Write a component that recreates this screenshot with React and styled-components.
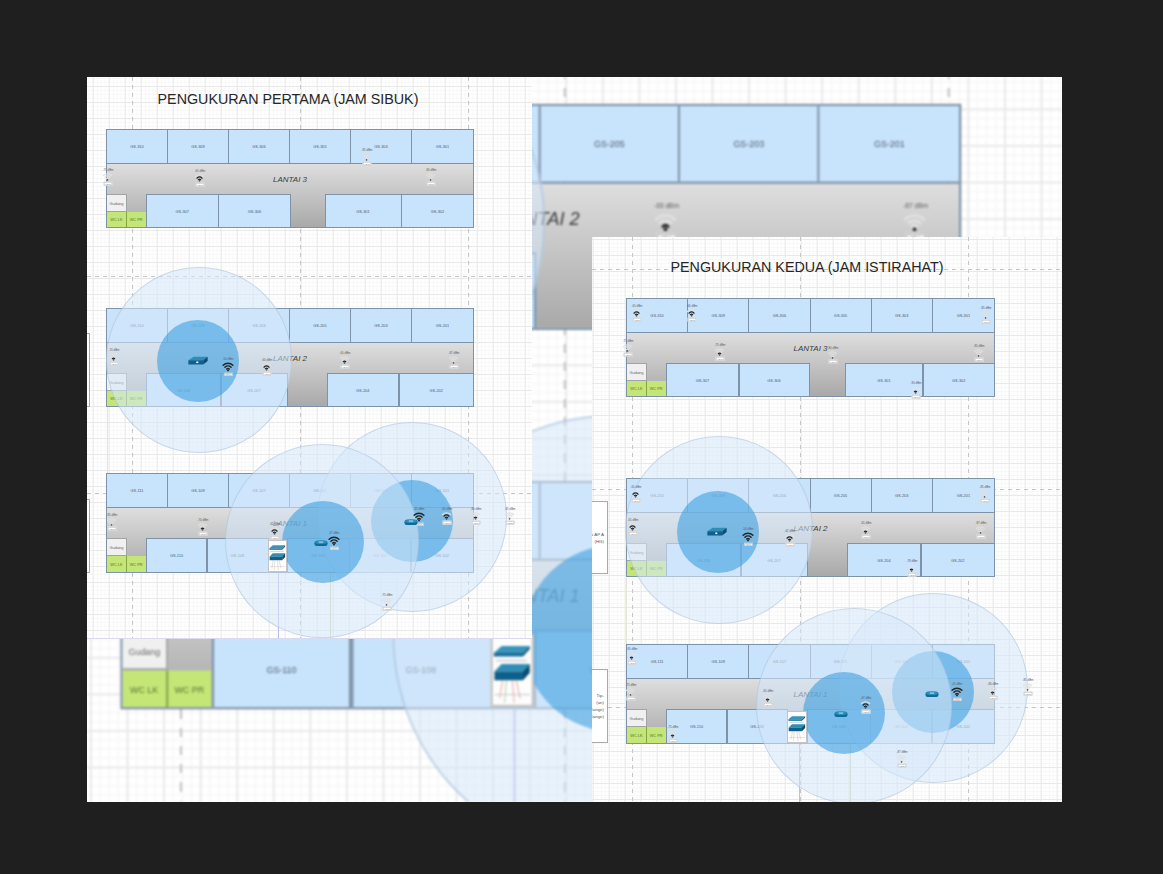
import React from 'react';
import styled, { createGlobalStyle } from 'styled-components';

const FONT = '"Liberation Sans", Arial, sans-serif';
const ROOM_LINE = '#7f93a8';

const GlobalStyle = createGlobalStyle`
    html, body {
        margin: 0;
        padding: 0;
        background-color: #1f1f1f;
        font-family: ${FONT};
    }
`;

const Page = styled.div`
    min-height: 100vh;
    box-sizing: border-box;
    padding: 77px 0 0 87px;
`;

const Stage = styled.div`
    position: relative;
    width: 975px;
    height: 725px;
    overflow: hidden;
    background-color: #ffffff;
`;

// the sheets lie over each other like windows on a desktop
const ZoomSheet = styled.div`
    position: absolute;
    inset: 0;
    overflow: hidden;
    filter: blur(0.85px);
`;

const ZoomPlate = styled.div`
    position: absolute;
    left: -10.2px;
    top: -501.5px;
    transform: scale(2.285);
    transform-origin: 0 0;
`;

const LeftSheet = styled.div`
    position: absolute;
    left: 0;
    top: 0;
    width: 445px;
    height: 561px;
    overflow: hidden;
    border-bottom: 1px solid #d9d9ef;
`;

const FrontSheet = styled.div`
    position: absolute;
    left: 505px;
    top: 160px;
    width: 470px;
    height: 565px;
    overflow: hidden;
`;

const Drawing = styled.div.attrs((p) => ({
    style: { backgroundPosition: `${p.$gx}px ${p.$gy}px` },
}))`
    position: relative;
    width: ${(p) => p.$w}px;
    height: ${(p) => p.$h}px;
    overflow: hidden;
    background-color: #ffffff;
    background-image:
        linear-gradient(to right, #e9e9e9 1px, transparent 1px),
        linear-gradient(to bottom, #e9e9e9 1px, transparent 1px),
        linear-gradient(to right, #f8f8f8 1px, transparent 1px),
        linear-gradient(to bottom, #f8f8f8 1px, transparent 1px);
    background-size: 16px 16px, 16px 16px, 4px 4px, 4px 4px;
`;

const Guide = styled.div.attrs((p) => ({
    style: p.$vertical ? { left: p.$at } : { top: p.$at },
}))`
    position: absolute;
    ${(p) => (p.$vertical
        ? 'top: 0; bottom: 0; width: 1px; background: repeating-linear-gradient(to bottom, #c6c6c6 0 4px, transparent 4px 8px);'
        : 'left: 0; right: 0; height: 1px; background: repeating-linear-gradient(to right, #c6c6c6 0 4px, transparent 4px 8px);')}
`;

const Title = styled.div.attrs((p) => ({
    style: { left: p.$x, top: p.$y },
}))`
    position: absolute;
    transform: translate(-50%, -50%);
    white-space: nowrap;
    font-size: 14.3px;
    color: #262626;
`;

const Floor = styled.div.attrs((p) => ({
    style: { left: p.$x, top: p.$y, width: p.$w },
}))`
    position: absolute;
    box-sizing: border-box;
    display: flex;
    flex-direction: column;
    height: ${(p) => 34 + 31 + p.$low}px;
    border: 1px solid ${ROOM_LINE};
`;

const TopRow = styled.div`
    flex: 0 0 33px;
    display: grid;
    grid-template-columns: repeat(6, 1fr);
`;

const Room = styled.div`
    display: flex;
    align-items: center;
    justify-content: center;
    box-sizing: border-box;
    background-color: #c8e3fc;
    border-right: 1px solid ${ROOM_LINE};
    font-size: 3.9px;
    color: #4e5b6b;

    &:last-child {
        border-right: none;
    }
`;

const Body = styled.div`
    flex: 1;
    display: flex;
    flex-direction: column;
    border-top: 1px solid ${ROOM_LINE};
    background: linear-gradient(to bottom, #dedede, #a9a9a9);
`;

const Corridor = styled.div`
    flex: 1;
    display: flex;
    align-items: center;
    justify-content: center;
    font-size: 8px;
    font-style: italic;
    color: #3c3c3c;
`;

const BottomRow = styled.div`
    flex: 0 0 ${(p) => p.$low - 1}px;
    display: flex;
`;

const ServiceBlock = styled.div`
    flex: 0 0 39.5px;
    display: flex;
    flex-direction: column;
`;

const Storage = styled.div`
    flex: 0 0 18px;
    box-sizing: border-box;
    width: 20px;
    display: flex;
    align-items: center;
    justify-content: center;
    background-color: #f0f0f0;
    border: 1px solid #a3a3a3;
    border-left: none;
    font-size: 3.9px;
    color: #666666;
`;

const ToiletRow = styled.div`
    flex: 1;
    display: flex;
`;

const Toilet = styled.div`
    flex: 1;
    display: flex;
    align-items: center;
    justify-content: center;
    box-sizing: border-box;
    background-color: #c3e676;
    border-right: 1px solid #85a545;
    font-size: 3.9px;
    color: #567330;
`;

const LowerRoom = styled(Room)`
    flex: 0 0 ${(p) => p.$w}px;
    border-top: 1px solid ${ROOM_LINE};
    border-left: 1px solid ${ROOM_LINE};
    margin-left: -0.5px;

    &:last-child {
        flex: 1;
    }
`;

const Gap = styled.div`
    flex: 0 0 ${(p) => p.$w}px;
`;

const RackBox = styled.div`
    flex: 0 0 ${(p) => p.$w}px;
    box-sizing: border-box;
    background-color: #fdfdfd;
    border: 1px solid #c4c4c4;
    margin: 2px 0 0 -0.5px;
    z-index: 1;

    svg {
        display: block;
        width: 100%;
        height: 100%;
    }
`;

const Coverage = styled.div.attrs((p) => ({
    style: {
        left: p.$x - p.$r,
        top: p.$y - p.$r,
        width: p.$r * 2,
        height: p.$r * 2,
    },
}))`
    position: absolute;
    box-sizing: border-box;
    border-radius: 50%;
    ${(p) => (p.$strong
        ? 'background-color: rgba(62, 160, 225, 0.6);'
        : 'background-color: rgba(214, 232, 250, 0.55); border: 1px solid rgba(150, 178, 205, 0.4);')}
`;

const Cable = styled.div.attrs((p) => ({
    style: { left: p.$x, top: p.$y, height: p.$h },
}))`
    position: absolute;
    width: 1px;
    background-color: ${(p) => p.$color};
`;

const Legend = styled.div.attrs((p) => ({
    style: { left: p.$x, top: p.$y, height: p.$h },
}))`
    position: absolute;
    box-sizing: border-box;
    width: 60px;
    display: flex;
    flex-direction: column;
    justify-content: center;
    gap: 2px;
    padding-right: 3px;
    background-color: #ffffff;
    border: 1px solid #a9a9a9;
    text-align: right;
    font-size: 4.4px;
    color: #555555;
`;

const ApMark = styled.div.attrs((p) => ({
    style: { left: p.$x, top: p.$y },
}))`
    position: absolute;
    transform: translate(-50%, -50%);
    display: flex;
    flex-direction: column;
    align-items: center;
    gap: 1px;
    line-height: 1;
    z-index: 2;
`;

const ApReading = styled.span`
    font-size: 2.9px;
    height: 3px;
    white-space: nowrap;
    color: #5f5f5f;
`;

const ApTag = styled.span`
    box-sizing: border-box;
    width: 9px;
    height: 3.5px;
    display: flex;
    align-items: center;
    justify-content: center;
    background-color: #ffffff;
    border: 0.5px solid #c8c8c8;
    font-size: 2.2px;
    color: #777777;
`;

const DeviceMark = styled.div.attrs((p) => ({
    style: { left: p.$x, top: p.$y },
}))`
    position: absolute;
    transform: translate(-50%, -50%);
    line-height: 0;
    z-index: 2;
`;

const WifiGlyph = ({ level, size }) => {
    const tone = (min) => (level >= min ? '#262626' : '#e0e0e0');
    return (
        <svg width={size} height={size * 0.82} viewBox="0 0 16 13" fill="none" strokeWidth="2" strokeLinecap="round">
            <path d="M1.5 4.6 A9.4 9.4 0 0 1 14.5 4.6" stroke={tone(3)} />
            <path d="M3.9 7.2 A5.9 5.9 0 0 1 12.1 7.2" stroke={tone(2)} />
            <path d="M6.2 9.6 A2.7 2.7 0 0 1 9.8 9.6" stroke={tone(1)} />
            <circle cx="8" cy="11.6" r="1.3" fill="#262626" />
        </svg>
    );
};

const SwitchGlyph = () => (
    <svg width="21" height="11" viewBox="0 0 24 12">
        <polygon points="7,1 23,1 18,5 1,5" fill="#2f8db6" />
        <polygon points="1,5 18,5 18,10 1,10" fill="#0e5f8c" />
        <polygon points="18,5 23,1 23,6 18,10" fill="#0a4c72" />
        <rect x="10" y="6.6" width="2.4" height="1.8" fill="#ffffff" />
    </svg>
);

const PuckGlyph = () => (
    <svg width="14" height="7" viewBox="0 0 16 8">
        <rect x="0.5" y="1.5" width="15" height="6" rx="2.6" fill="#0f6a97" />
        <ellipse cx="8" cy="3" rx="7" ry="2.2" fill="#2b8fba" />
        <rect x="5.5" y="2.4" width="5" height="1" fill="#d7edf7" />
    </svg>
);

const RackGlyph = () => (
    <svg viewBox="0 0 20 32" preserveAspectRatio="none">
        <polygon points="4.5,4.5 19,4.5 15.5,7.8 0.5,7.8" fill="#3a93b9" />
        <polygon points="0.5,7.8 15.5,7.8 15.5,9.4 0.5,9.4" fill="#1a6e97" />
        <polygon points="15.5,7.8 19,4.5 19,6 15.5,9.4" fill="#125a7f" />
        <rect x="1.5" y="11" width="16" height="0.7" fill="#c7ccd1" />
        <polygon points="4.5,13 19,13 15.5,16.5 0.8,16.5" fill="#2f8db6" />
        <polygon points="0.8,16.5 15.5,16.5 15.5,20.5 0.8,20.5" fill="#0e5f8c" />
        <polygon points="15.5,16.5 19,13 19,17 15.5,20.5" fill="#0a4c72" />
        <path d="M5 20.5 L3.5 29 M12 20.5 L14 29 M10 20.5 L11 31" stroke="#e0938f" strokeWidth="0.4" fill="none" />
        <path d="M7 20.5 L6 31" stroke="#9bc98b" strokeWidth="0.4" fill="none" />
        <rect x="1" y="27" width="18" height="0.5" fill="#c9c9c9" />
    </svg>
);

const FloorPlan = ({ floor }) => (
    <Floor $x={floor.x} $y={floor.y} $w={floor.w} $low={floor.low}>
        <TopRow>
            {floor.top.map((name) => <Room key={name}>{name}</Room>)}
        </TopRow>
        <Body>
            <Corridor>{floor.name}</Corridor>
            <BottomRow $low={floor.low}>
                <ServiceBlock>
                    <Storage>Gudang</Storage>
                    <ToiletRow>
                        <Toilet>WC LK</Toilet>
                        <Toilet>WC PR</Toilet>
                    </ToiletRow>
                </ServiceBlock>
                {floor.bottom.map((item, index) => {
                    if (item.gap) return <Gap key={index} $w={item.gap} />;
                    if (item.rack) return <RackBox key={index} $w={item.rack}><RackGlyph /></RackBox>;
                    return <LowerRoom key={index} $w={item.w}>{item.name}</LowerRoom>;
                })}
            </BottomRow>
        </Body>
    </Floor>
);

const PlanDrawing = ({ plan }) => {
    const { ox, oy } = plan;
    return (
        <Drawing $w={plan.w} $h={plan.h} $gx={plan.gx} $gy={plan.gy}>
            {plan.guidesX.map((x) => <Guide key={x} $vertical $at={x - ox} />)}
            {plan.guidesY.map((y) => <Guide key={y} $at={y - oy} />)}
            {plan.legends.map((box) => (
                <Legend key={box.y} $x={box.x - ox} $y={box.y - oy} $h={box.h}>
                    {box.lines.map((line) => <span key={line}>{line}</span>)}
                </Legend>
            ))}
            {plan.cables.map((c) => (
                <Cable key={c.x} $x={c.x - ox} $y={c.y - oy} $h={c.h} $color={c.color} />
            ))}
            {plan.floors.map((floor) => (
                <FloorPlan key={floor.name} floor={{ ...floor, x: floor.x - ox, y: floor.y - oy }} />
            ))}
            {plan.circles.map((c) => (
                <Coverage key={`${c.x}-${c.r}`} $x={c.x - ox} $y={c.y - oy} $r={c.r} $strong={c.r < 50} />
            ))}
            <Title $x={plan.titleX - ox} $y={plan.titleY - oy}>{plan.title}</Title>
            {plan.aps.map(([x, y, level, reading]) => (
                <ApMark key={`${x}-${y}`} $x={x - ox} $y={y - oy}>
                    <ApReading>{reading} dBm</ApReading>
                    <WifiGlyph level={level} size={level === 3 ? 12 : 10} />
                    <ApTag>AP 1</ApTag>
                </ApMark>
            ))}
            {plan.devices.map(([x, y, kind]) => (
                <DeviceMark key={`${x}-${y}`} $x={x - ox} $y={y - oy}>
                    {kind === 'switch' ? <SwitchGlyph /> : <PuckGlyph />}
                </DeviceMark>
            ))}
        </Drawing>
    );
};

const FIRST_PLAN = {
    ox: 87,
    oy: 77,
    w: 445,
    h: 561,
    gx: 5.7,
    gy: 9,
    title: 'PENGUKURAN PERTAMA (JAM SIBUK)',
    titleX: 288,
    titleY: 99,
    guidesX: [132, 300, 468],
    guidesY: [276, 493],
    legends: [
        { x: 30, y: 333, h: 74, lines: [] },
        { x: 30, y: 499, h: 74, lines: [] },
    ],
    cables: [
        { x: 107, y: 407, h: 66, color: '#dfe8cf' },
        { x: 278, y: 573, h: 65, color: '#bcbce8' },
        { x: 330, y: 560, h: 78, color: '#c9dcae' },
    ],
    floors: [
        {
            name: 'LANTAI 3', x: 106, y: 129, w: 368, low: 34,
            top: ['GS-310', 'GS-309', 'GS-306', 'GS-305', 'GS-303', 'GS-301'],
            bottom: [
                { name: 'GS-307', w: 72.5 }, { name: 'GS-306', w: 73 }, { gap: 34 },
                { name: 'GS-301', w: 77 }, { name: 'GS-302', w: 71 },
            ],
        },
        {
            name: 'LANTAI 2', x: 106, y: 308, w: 368, low: 34,
            top: ['GS-210', 'GS-209', 'GS-206', 'GS-205', 'GS-203', 'GS-201'],
            bottom: [
                { name: 'GS-208', w: 75 }, { name: 'GS-207', w: 67 }, { gap: 39.5 },
                { name: 'GS-204', w: 72.5 }, { name: 'GS-202', w: 73 },
            ],
        },
        {
            name: 'LANTAI 1', x: 106, y: 473, w: 368, low: 35,
            top: ['GS-111', 'GS-109', 'GS-107', 'GS-105', 'GS-103', 'GS-101'],
            bottom: [
                { name: 'GS-110', w: 61 }, { name: 'GS-108', w: 62 }, { rack: 19 },
                { name: 'GS-106', w: 63 }, { name: 'GS-104', w: 62 }, { name: 'GS-102', w: 61 },
            ],
        },
    ],
    circles: [
        { x: 199, y: 360, r: 93 },
        { x: 198, y: 361, r: 41 },
        { x: 412, y: 517, r: 95 },
        { x: 412, y: 521, r: 41 },
        { x: 322, y: 541, r: 97 },
        { x: 323, y: 542, r: 41 },
    ],
    aps: [
        [108, 177, 0, -71], [200, 178, 2, -65], [367, 157, 0, -85], [431, 177, 0, -80],
        [114, 357, 1, -70], [228, 367, 3, -54], [267, 367, 2, -60], [345, 360, 1, -65], [454, 360, 0, -87],
        [112, 522, 0, -85], [203, 527, 1, -70], [275, 531, 2, -62], [334, 541, 3, -47],
        [419, 517, 3, -45], [447, 516, 2, -60], [476, 516, 1, -80], [510, 516, 0, -85], [387, 602, 0, -75],
    ],
    devices: [[198, 361, 'switch'], [321, 543, 'puck'], [411, 522, 'puck']],
};

const SECOND_PLAN = {
    ox: 592,
    oy: 237,
    w: 470,
    h: 565,
    gx: 0.7,
    gy: 2,
    title: 'PENGUKURAN KEDUA (JAM ISTIRAHAT)',
    titleX: 807,
    titleY: 267,
    guidesX: [632, 800, 968],
    guidesY: [269, 489, 707],
    legends: [
        { x: 548, y: 501, h: 73, lines: ['Lokasi AP A', '(HG)'] },
        { x: 548, y: 669, h: 74, lines: ['Tip-', '(an)', 'Range)', 'Range)'] },
    ],
    cables: [
        { x: 626, y: 578, h: 66, color: '#dfe8cf' },
        { x: 799, y: 744, h: 60, color: '#bcbce8' },
        { x: 850, y: 744, h: 60, color: '#c9dcae' },
    ],
    floors: [
        {
            name: 'LANTAI 3', x: 626, y: 298, w: 369, low: 34,
            top: ['GS-310', 'GS-309', 'GS-306', 'GS-305', 'GS-303', 'GS-301'],
            bottom: [
                { name: 'GS-307', w: 73 }, { name: 'GS-306', w: 71 }, { gap: 36 },
                { name: 'GS-301', w: 78 }, { name: 'GS-302', w: 71 },
            ],
        },
        {
            name: 'LANTAI 2', x: 626, y: 478, w: 369, low: 34,
            top: ['GS-210', 'GS-209', 'GS-206', 'GS-205', 'GS-203', 'GS-201'],
            bottom: [
                { name: 'GS-208', w: 75 }, { name: 'GS-207', w: 67 }, { gap: 40 },
                { name: 'GS-204', w: 74 }, { name: 'GS-202', w: 73 },
            ],
        },
        {
            name: 'LANTAI 1', x: 626, y: 644, w: 369, low: 35,
            top: ['GS-111', 'GS-109', 'GS-107', 'GS-105', 'GS-103', 'GS-101'],
            bottom: [
                { name: 'GS-110', w: 61 }, { name: 'GS-108', w: 61 }, { rack: 20 },
                { name: 'GS-106', w: 64 }, { name: 'GS-104', w: 62 }, { name: 'GS-102', w: 61 },
            ],
        },
    ],
    circles: [
        { x: 719, y: 530, r: 94 },
        { x: 718, y: 532, r: 41 },
        { x: 933, y: 688, r: 95 },
        { x: 933, y: 692, r: 41 },
        { x: 854, y: 706, r: 98 },
        { x: 844, y: 713, r: 41 },
    ],
    aps: [
        [637, 313, 2, -65], [692, 313, 2, -66], [986, 315, 0, -85],
        [628, 348, 0, -71], [720, 352, 1, -75], [833, 355, 0, -80], [979, 353, 0, -85], [916, 390, 1, -90],
        [636, 494, 2, -65], [985, 494, 0, -85], [633, 527, 2, -65], [748, 537, 3, -54],
        [790, 538, 2, -62], [866, 530, 1, -65], [981, 530, 0, -87], [912, 568, 1, -78],
        [632, 656, 1, -85], [631, 692, 0, -75], [768, 698, 1, -65], [866, 705, 2, -47],
        [957, 692, 3, -45], [993, 691, 1, -80], [1028, 687, 0, -85], [673, 734, 1, -75], [902, 759, 0, -87],
    ],
    devices: [[717, 532, 'switch'], [841, 714, 'puck'], [932, 694, 'puck']],
};

const App = () => (
    <Page>
        <GlobalStyle />
        <Stage>
            <ZoomSheet>
                <ZoomPlate>
                    <PlanDrawing plan={FIRST_PLAN} />
                </ZoomPlate>
            </ZoomSheet>
            <LeftSheet>
                <PlanDrawing plan={FIRST_PLAN} />
            </LeftSheet>
            <FrontSheet>
                <PlanDrawing plan={SECOND_PLAN} />
            </FrontSheet>
        </Stage>
    </Page>
);

export default App;
